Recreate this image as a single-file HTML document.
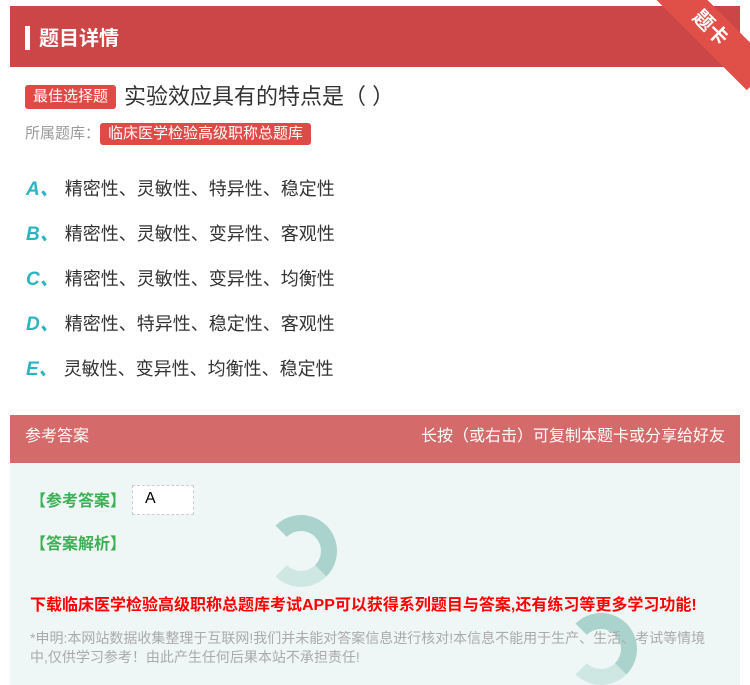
<!DOCTYPE html>
<html><head><meta charset="utf-8"><style>
*{margin:0;padding:0;box-sizing:border-box}
body{width:750px;height:685px;background:#fff;font-family:"Liberation Sans","Noto Sans CJK SC",sans-serif;position:relative;overflow:hidden}
.hdr{position:absolute;left:10px;top:6px;width:730px;height:61px;background:#cc4648;color:#fff;font-size:20px;font-weight:bold}
.hdr .bar{position:absolute;left:15px;top:20px;width:5px;height:24px;background:#fff}
.hdr span{position:absolute;left:29px;top:16px}
.ribbon{position:absolute;right:-30px;top:10px;width:140px;height:36px;background:#e05048;transform:rotate(45deg);color:#fff;font-size:20px;font-weight:bold;text-align:center;line-height:36px;transform-origin:center}
.tag{display:inline-block;background:#e04a46;color:#fff;font-size:15px;border-radius:3px;padding:0 8px;line-height:24px}
.q{position:absolute;left:25px;top:79px;font-size:22px;color:#333}
.q .tag{vertical-align:3px;margin-right:8px}
.lib{position:absolute;left:25px;top:122px;font-size:15px;color:#999}
.lib .tag{line-height:22px}
.opt{position:absolute;left:26px;font-size:18px;color:#333}
.opt b{color:#2bb5c0;font-style:italic;font-size:19px;margin-right:6px}
.ans{position:absolute;left:10px;top:415px;width:730px;height:270px;background:#eef7f6}
.ah{height:48px;background:#d46a6a;color:#fff;font-size:16px;line-height:44px;padding:0 15px;display:flex;justify-content:space-between}
.g{position:absolute;color:#3cb054;font-size:16px;font-weight:bold}
.red{position:absolute;left:20px;top:176px;color:#f00;font-size:16px;font-weight:bold;letter-spacing:0px}
.note{position:absolute;left:20px;top:214px;width:690px;color:#aaa;font-size:14px;line-height:19px}
.swirl{position:absolute;width:72px;height:72px;border-radius:50%;border:16px solid #a9d3cc;border-left-color:transparent;border-bottom-color:#cfe7e3}
</style></head><body>
<div class="hdr"><div class="bar"></div><span>题目详情</span></div>
<div class="ribbon">题卡</div>
<div class="q"><span class="tag">最佳选择题</span>实验效应具有的特点是（ ）</div>
<div class="lib">所属题库：<span class="tag">临床医学检验高级职称总题库</span></div>
<div class="opt" style="top:174px"><b>A、</b>精密性、灵敏性、特异性、稳定性</div>
<div class="opt" style="top:219px"><b>B、</b>精密性、灵敏性、变异性、客观性</div>
<div class="opt" style="top:264px"><b>C、</b>精密性、灵敏性、变异性、均衡性</div>
<div class="opt" style="top:309px"><b>D、</b>精密性、特异性、稳定性、客观性</div>
<div class="opt" style="top:354px"><b>E、</b>灵敏性、变异性、均衡性、稳定性</div>
<div class="ans">
<div class="ah"><span>参考答案</span><span>长按（或右击）可复制本题卡或分享给好友</span></div>
<div class="swirl" style="left:255px;top:100px"></div>
<div class="swirl" style="left:555px;top:198px"></div>
<div class="g" style="left:20px;top:72px">【参考答案】</div>
<div style="position:absolute;left:122px;top:70px;width:62px;height:30px;background:#fff;border:1px dashed #ccc;font-size:16px;padding-left:12px;line-height:26px">A</div>
<div class="g" style="left:20px;top:115px">【答案解析】</div>
<div class="red">下载临床医学检验高级职称总题库考试APP可以获得系列题目与答案,还有练习等更多学习功能!</div>
<div class="note">*申明:本网站数据收集整理于互联网!我们并未能对答案信息进行核对!本信息不能用于生产、生活、考试等情境中,仅供学习参考！由此产生任何后果本站不承担责任!</div>
</div>
</body></html>
